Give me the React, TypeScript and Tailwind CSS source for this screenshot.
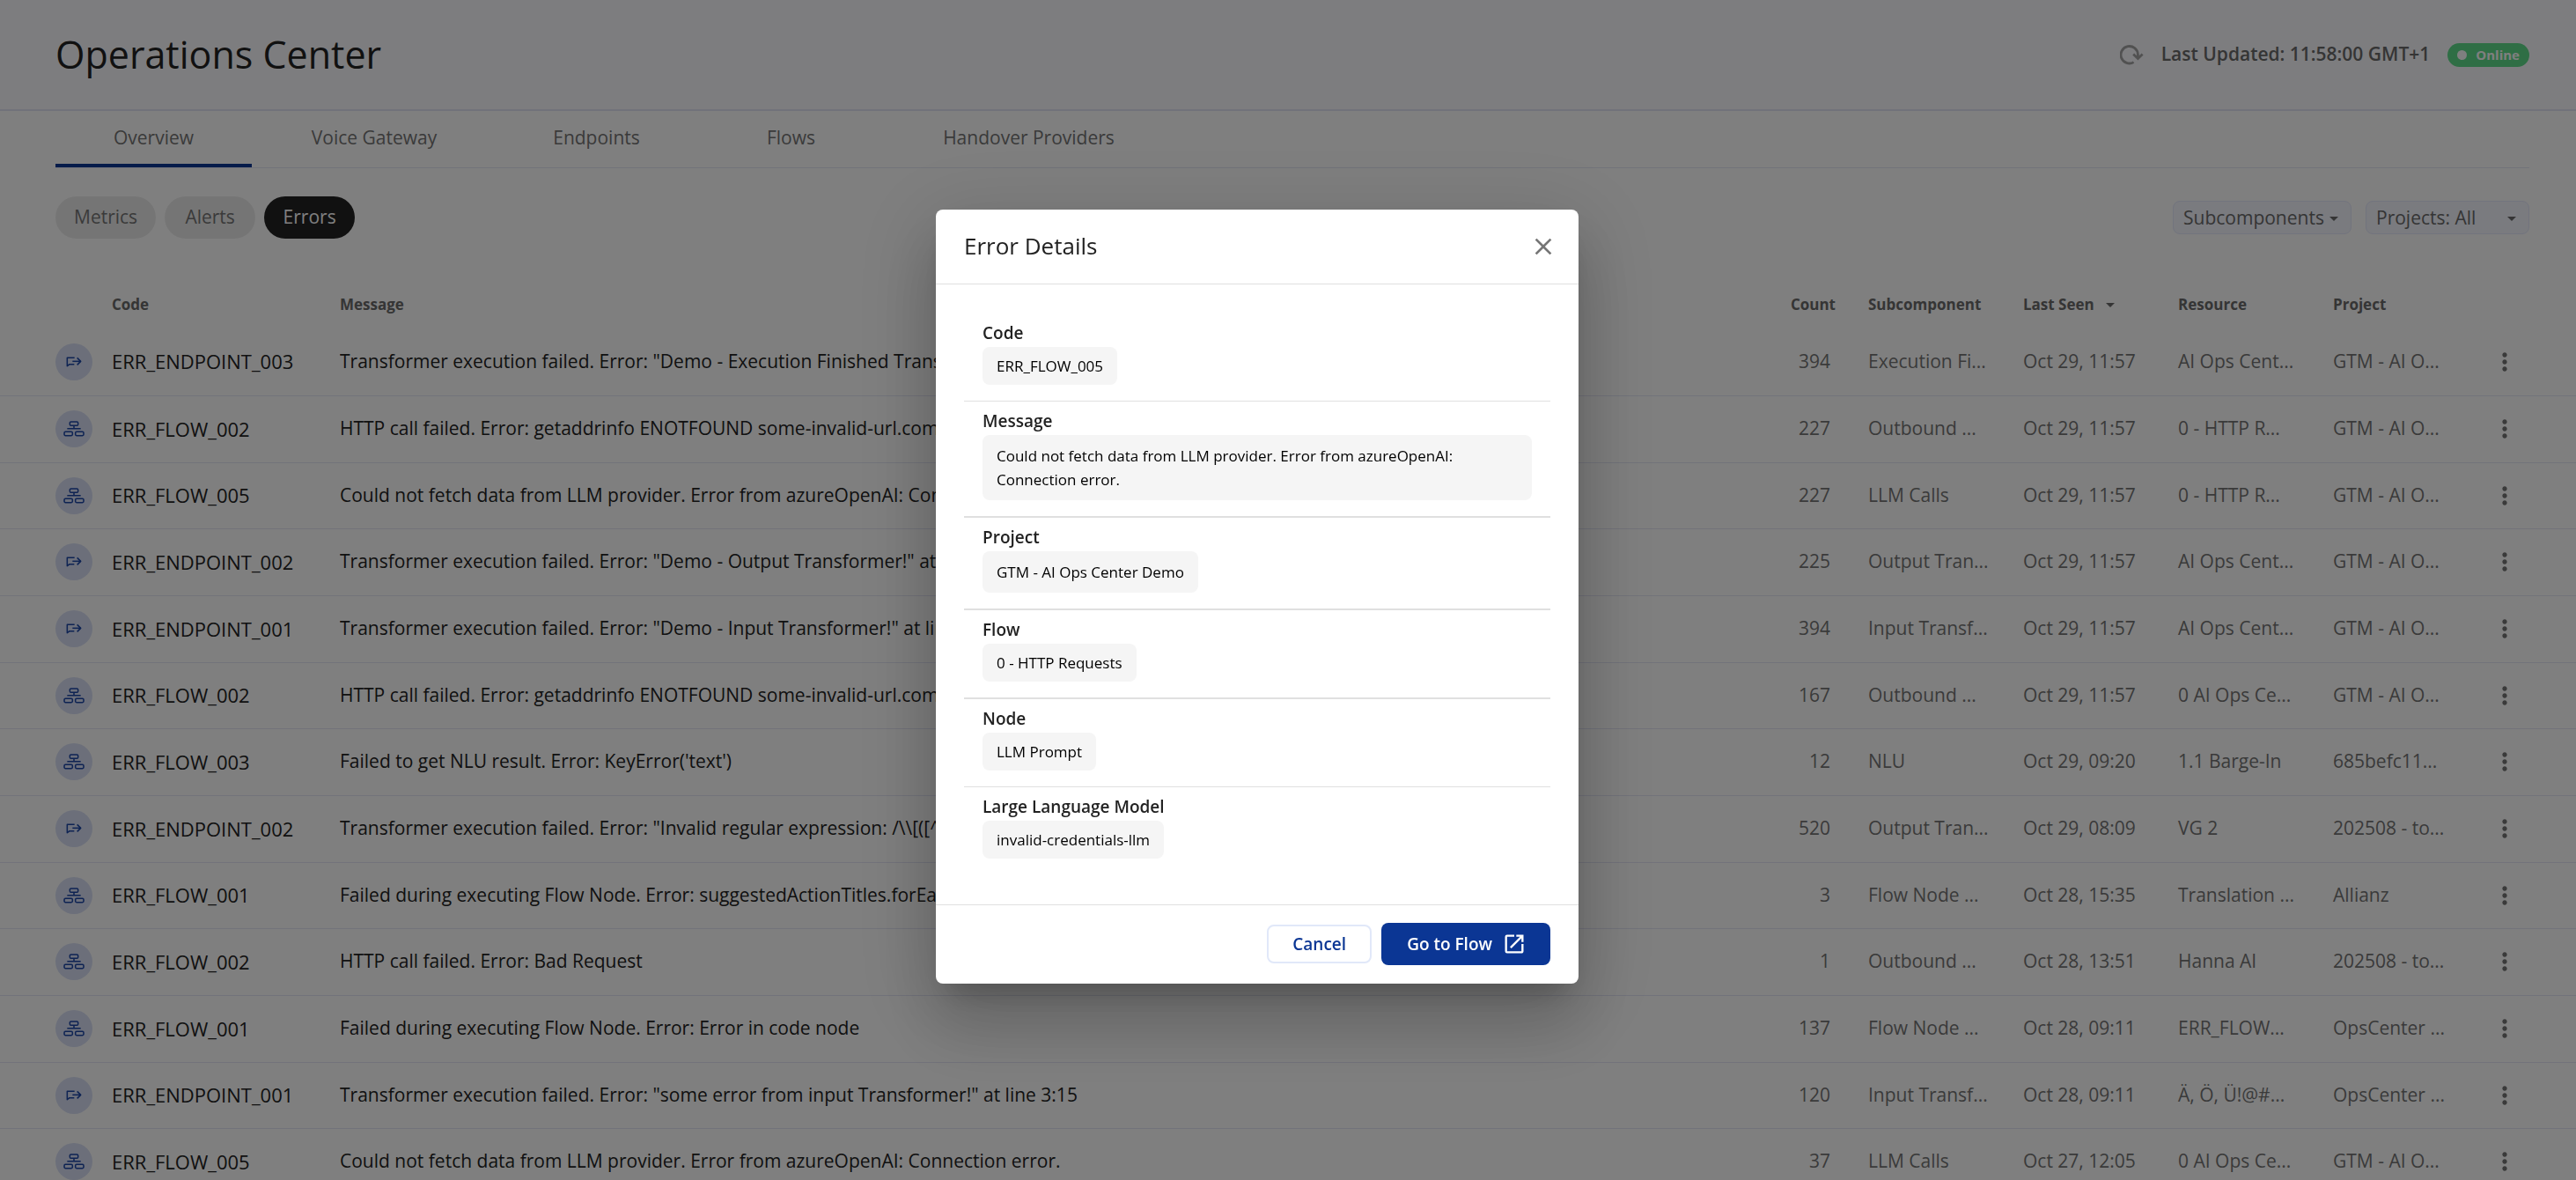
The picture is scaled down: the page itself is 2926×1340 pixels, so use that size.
import { MdArrowDropDown, MdClose, MdMoreVert, MdOpenInNew } from "react-icons/md";

const tabs = [
	{ title: "Overview", width: "w-[223px]", active: true },
	{ title: "Voice Gateway", width: "w-[278px]", active: false },
	{ title: "Endpoints", width: "w-[227px]", active: false },
	{ title: "Flows", width: "w-[215px]", active: false },
	{ title: "Handover Providers", width: "w-[325px]", active: false },
];

const views = ["Metrics", "Alerts", "Errors"];

const errors = [
	{
		code: "ERR_ENDPOINT_003",
		message: 'Transformer execution failed. Error: "Demo - Execution Finished Transformer!" at line 3:15',
		count: 394,
		subcomponent: "Execution Fi...",
		lastSeen: "Oct 29, 11:57",
		resource: "AI Ops Cent...",
		project: "GTM - AI O...",
	},
	{
		code: "ERR_FLOW_002",
		message: "HTTP call failed. Error: getaddrinfo ENOTFOUND some-invalid-url.com",
		count: 227,
		subcomponent: "Outbound ...",
		lastSeen: "Oct 29, 11:57",
		resource: "0 - HTTP R...",
		project: "GTM - AI O...",
	},
	{
		code: "ERR_FLOW_005",
		message: "Could not fetch data from LLM provider. Error from azureOpenAI: Connection error.",
		count: 227,
		subcomponent: "LLM Calls",
		lastSeen: "Oct 29, 11:57",
		resource: "0 - HTTP R...",
		project: "GTM - AI O...",
	},
	{
		code: "ERR_ENDPOINT_002",
		message: 'Transformer execution failed. Error: "Demo - Output Transformer!" at line 3:15',
		count: 225,
		subcomponent: "Output Tran...",
		lastSeen: "Oct 29, 11:57",
		resource: "AI Ops Cent...",
		project: "GTM - AI O...",
	},
	{
		code: "ERR_ENDPOINT_001",
		message: 'Transformer execution failed. Error: "Demo - Input Transformer!" at line 3:15',
		count: 394,
		subcomponent: "Input Transf...",
		lastSeen: "Oct 29, 11:57",
		resource: "AI Ops Cent...",
		project: "GTM - AI O...",
	},
	{
		code: "ERR_FLOW_002",
		message: "HTTP call failed. Error: getaddrinfo ENOTFOUND some-invalid-url.com",
		count: 167,
		subcomponent: "Outbound ...",
		lastSeen: "Oct 29, 11:57",
		resource: "0 AI Ops Ce...",
		project: "GTM - AI O...",
	},
	{
		code: "ERR_FLOW_003",
		message: "Failed to get NLU result. Error: KeyError('text')",
		count: 12,
		subcomponent: "NLU",
		lastSeen: "Oct 29, 09:20",
		resource: "1.1 Barge-In",
		project: "685befc11...",
	},
	{
		code: "ERR_ENDPOINT_002",
		message: 'Transformer execution failed. Error: "Invalid regular expression: /\\\\[([^',
		count: 520,
		subcomponent: "Output Tran...",
		lastSeen: "Oct 29, 08:09",
		resource: "VG 2",
		project: "202508 - to...",
	},
	{
		code: "ERR_FLOW_001",
		message: "Failed during executing Flow Node. Error: suggestedActionTitles.forEach is not a function",
		count: 3,
		subcomponent: "Flow Node ...",
		lastSeen: "Oct 28, 15:35",
		resource: "Translation ...",
		project: "Allianz",
	},
	{
		code: "ERR_FLOW_002",
		message: "HTTP call failed. Error: Bad Request",
		count: 1,
		subcomponent: "Outbound ...",
		lastSeen: "Oct 28, 13:51",
		resource: "Hanna AI",
		project: "202508 - to...",
	},
	{
		code: "ERR_FLOW_001",
		message: "Failed during executing Flow Node. Error: Error in code node",
		count: 137,
		subcomponent: "Flow Node ...",
		lastSeen: "Oct 28, 09:11",
		resource: "ERR_FLOW...",
		project: "OpsCenter ...",
	},
	{
		code: "ERR_ENDPOINT_001",
		message: 'Transformer execution failed. Error: "some error from input Transformer!" at line 3:15',
		count: 120,
		subcomponent: "Input Transf...",
		lastSeen: "Oct 28, 09:11",
		resource: "Ä, Ö, Ü!@#...",
		project: "OpsCenter ...",
	},
	{
		code: "ERR_FLOW_005",
		message: "Could not fetch data from LLM provider. Error from azureOpenAI: Connection error.",
		count: 37,
		subcomponent: "LLM Calls",
		lastSeen: "Oct 27, 12:05",
		resource: "0 AI Ops Ce...",
		project: "GTM - AI O...",
	},
];

const details = [
	{ label: "Code", value: "ERR_FLOW_005", padding: "py-2", divider: "border-b" },
	{
		label: "Message",
		value: "Could not fetch data from LLM provider. Error from azureOpenAI: Connection error.",
		padding: "py-2.5",
		divider: "border-b-2",
	},
	{ label: "Project", value: "GTM - AI Ops Center Demo", padding: "py-2.5", divider: "border-b-2" },
	{ label: "Flow", value: "0 - HTTP Requests", padding: "py-2", divider: "border-b-2" },
	{ label: "Node", value: "LLM Prompt", padding: "py-2", divider: "border-b" },
	{ label: "Large Language Model", value: "invalid-credentials-llm", padding: "py-2", divider: "" },
];

function RefreshIcon() {
	return (
		<svg width="27" height="24" viewBox="0 0 27 24" fill="none" stroke="currentColor" strokeWidth="2.8">
			<path d="M15.6 20.6 A9.7 9.7 0 1 1 20.4 12 V16" />
			<path d="M15.2 11.6 L20.4 16.6 L25.6 11.6" />
		</svg>
	);
}

function EndpointIcon() {
	return (
		<svg width="18" height="12" viewBox="0 0 54 36" fill="none" stroke="currentColor" strokeWidth="4.6" strokeLinejoin="round">
			<path d="M29 4 H4 V32 L12 26 H28" />
			<path d="M22 16 H50" />
			<path d="M38 4 L50 16 L38 28" />
		</svg>
	);
}

function FlowIcon() {
	return (
		<svg width="24" height="18" viewBox="0 0 72 54" fill="none" stroke="currentColor" strokeWidth="4.6">
			<rect x="22" y="3" width="28" height="13" rx="4" />
			<path d="M36 16 V26 M13 26 H59" />
			<rect x="3" y="37" width="28" height="13" rx="4" />
			<rect x="41" y="37" width="28" height="13" rx="4" />
		</svg>
	);
}

function Filter({ name, value, width }: { name: string; value: string; width: string }) {
	return (
		<div className={`relative ${width}`}>
			<select
				aria-label={name}
				className="h-[38px] w-full appearance-none rounded-lg border border-[#e4e8fb] bg-[#f4f6ff] px-[11px] text-[21px] leading-[30px] text-[#6a6a6a]"
			>
				<option>{value}</option>
			</select>
			<MdArrowDropDown size={24} className="pointer-events-none absolute right-2 top-2 text-[#6a6a6a]" />
		</div>
	);
}

function ErrorTable() {
	return (
		<table className="mt-12 w-full table-fixed text-left text-[21px] text-[#757575]">
			<colgroup>
				<col className="w-[127px]" />
				<col className="w-[259px]" />
				<col />
				<col className="w-[124px]" />
				<col className="w-[176px]" />
				<col className="w-[176px]" />
				<col className="w-[176px]" />
				<col className="w-[176px]" />
				<col className="w-[100px]" />
			</colgroup>
			<thead>
				<tr className="h-[54px] text-[17px] text-[#6a6a6a]">
					<th aria-label="Type" />
					<th>Code</th>
					<th>Message</th>
					<th className="pr-[37px] text-right">Count</th>
					<th>Subcomponent</th>
					<th>
						<div className="flex items-center gap-1.5">
							Last Seen
							<MdArrowDropDown size={24} />
						</div>
					</th>
					<th>Resource</th>
					<th>Project</th>
					<th aria-label="Actions" />
				</tr>
			</thead>
			<tbody>
				{errors.map((error, index) => (
					<tr key={index} className="h-[76px] border-b border-[#e4e6f5] whitespace-nowrap nth-[3n]:h-[75px]">
						<td className="pl-[63px]">
							<div className="flex size-[42px] items-center justify-center rounded-full bg-[#d8dff5] text-[#1c46a6]">
								{error.code.includes("ENDPOINT") ? <EndpointIcon /> : <FlowIcon />}
							</div>
						</td>
						<td className="text-[22px] font-medium text-[#222222]">{error.code}</td>
						<td className="truncate font-medium text-[#222222]">{error.message}</td>
						<td className="pr-[43px] text-right">{error.count}</td>
						<td>{error.subcomponent}</td>
						<td>{error.lastSeen}</td>
						<td>{error.resource}</td>
						<td>{error.project}</td>
						<td className="pl-[3px]">
							<button type="button" aria-label="More actions" className="flex">
								<MdMoreVert size={32} />
							</button>
						</td>
					</tr>
				))}
			</tbody>
		</table>
	);
}

function ErrorDetails() {
	return (
		<div className="fixed inset-0 flex items-center justify-center bg-black/50 pt-3.5 pr-[70px]">
			<div
				role="dialog"
				aria-labelledby="dialog-title"
				className="w-full max-w-[730px] rounded-lg bg-white shadow-[0_22px_30px_-14px_rgba(0,0,0,0.2),0_48px_76px_6px_rgba(0,0,0,0.14),0_18px_92px_16px_rgba(0,0,0,0.12)]"
			>
				<div className="flex h-[85px] items-center justify-between border-b border-[#e0e0e0] pr-6 pl-8">
					<h2 id="dialog-title" className="text-[26px] font-medium text-[#222222]">
						Error Details
					</h2>
					<button type="button" aria-label="Close" className="text-[#757575]">
						<MdClose size={32} />
					</button>
				</div>

				<dl className="px-8 pt-[33px] pb-[34px]">
					{details.map((detail) => (
						<div
							key={detail.label}
							className={`flex flex-col items-start px-[21px] pt-2.5 pb-[18px] border-[#e0e0e0] ${detail.divider}`}
						>
							<dt className="text-[19px] leading-6 font-semibold text-[#222222]">{detail.label}</dt>
							<dd className={`mt-1 rounded-lg bg-[#f5f5f5] px-4 text-[17px] leading-[27px] font-medium text-black ${detail.padding}`}>
								{detail.value}
							</dd>
						</div>
					))}
				</dl>

				<div className="flex h-[90px] items-center justify-end gap-[11px] border-t border-[#e0e0e0] pr-8">
					<button
						type="button"
						className="h-11 rounded-lg border-2 border-[#e1e8f9] px-[27px] text-[19px] font-semibold text-[#0b3694]"
					>
						Cancel
					</button>
					<button
						type="button"
						className="flex h-12 items-center gap-[11px] rounded-lg bg-[#0b3694] pr-[27px] pl-[29px] text-[19px] font-semibold text-white"
					>
						Go to Flow
						<MdOpenInNew size={28} />
					</button>
				</div>
			</div>
		</div>
	);
}

export default function App() {
	return (
		<div className="h-screen overflow-hidden bg-white font-['Open_Sans',sans-serif]">
			<header className="flex h-[126px] items-center justify-between border-b-2 border-[#e2e4f4] bg-[#fbfbff] pr-[53px] pl-[63px]">
				<h1 className="text-[43px] font-medium text-[#222222]">Operations Center</h1>
				<div className="flex items-center text-[21px] font-semibold text-[#6a6a6a]">
					<button type="button" aria-label="Refresh" className="mr-5 text-[#a3a3a3]">
						<RefreshIcon />
					</button>
					<span>Last Updated: 11:58:00 GMT+1</span>
					<span className="ml-5 flex h-[27px] items-center gap-2.5 rounded-full bg-[#5fdd8b] px-[11px] text-[15px] font-bold text-white">
						<span className="size-[11px] rounded-full bg-white" />
						Online
					</span>
				</div>
			</header>

			<nav className="mr-[53px] ml-[63px] flex h-[65px] border-b border-[#e4e6f5]">
				{tabs.map((tab) => (
					<button
						key={tab.title}
						type="button"
						className={`border-b-4 pt-0.5 text-[21px] text-[#757575] ${tab.width} ${tab.active ? "border-[#0b3694]" : "border-transparent"}`}
					>
						{tab.title}
					</button>
				))}
			</nav>

			<div className="mt-8 flex h-12 items-center justify-between pr-[53px] pl-[63px]">
				<div className="flex gap-2.5">
					{views.map((view) => (
						<button
							key={view}
							type="button"
							className={`h-12 min-w-[103px] rounded-full px-[21px] text-[21px] ${view === "Errors" ? "bg-[#222222] text-white" : "bg-[#ebebeb] text-[#757575]"}`}
						>
							{view}
						</button>
					))}
				</div>
				<div className="flex gap-4">
					<Filter name="Subcomponents" value="Subcomponents" width="w-[203px]" />
					<Filter name="Projects" value="Projects: All" width="w-[186px]" />
				</div>
			</div>

			<ErrorTable />
			<ErrorDetails />
		</div>
	);
}
